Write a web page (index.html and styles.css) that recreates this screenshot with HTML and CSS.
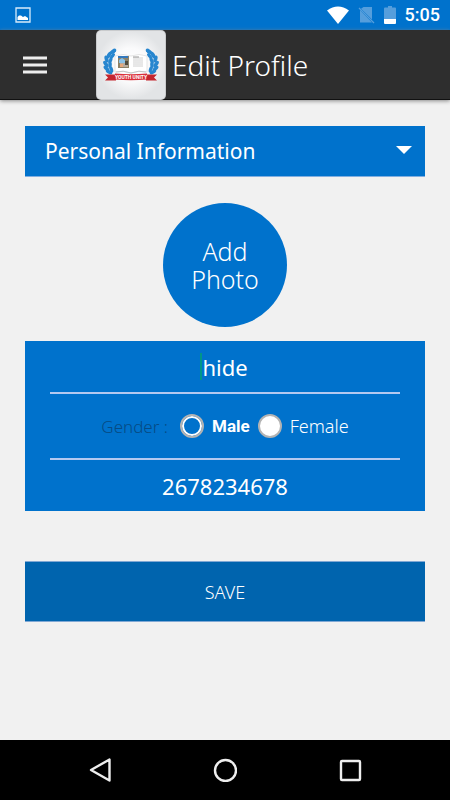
FILE: index.html
```html
<!DOCTYPE html>
<html lang="en">
<head>
<meta charset="utf-8">
<meta name="viewport" content="width=device-width, initial-scale=1">
<title>Edit Profile</title>
<link rel="stylesheet" href="styles.css">
</head>
<body>
<div class="status-bar">
  <svg class="status-picture" width="16" height="16" viewBox="0 0 16 16" aria-hidden="true">
    <path d="M1 1H15V15H1Z" fill="none" stroke="#d7ebfa" stroke-width="1.3"/>
    <path d="M2.500 13V10L4 8.500H6L8 10L10 9L13 11V13Z" fill="#fff"/>
  </svg>
  <div class="status-icons">
    <svg width="22" height="18" viewBox="0 0 22 18" aria-hidden="true"><path d="M0 4.500Q11-3.500 22 4.500L11 18Z" fill="#fff"/></svg>
    <svg width="17" height="18" viewBox="0 0 17 18" aria-hidden="true">
      <path d="M5.500 1H14V13.500L3 2.700ZM2 4L14 16.500H2Z" fill="#559edc"/>
      <path d="M1 2L16 17" stroke="#559edc" stroke-width="1.300"/>
    </svg>
    <svg width="12" height="18" viewBox="0 0 12 18" aria-hidden="true">
      <path d="M4 0H8V1.500H11Q12 1.500 12 2.500V13H0V2.500Q0 1.500 1 1.500H4Z" fill="#559edc"/>
      <path d="M0 13H12V17Q12 18 11 18H1Q0 18 0 17Z" fill="#fff"/>
    </svg>
  </div>
  <span class="clock">5:05</span>
</div>
<header class="app-bar">
  <button class="menu-button" type="button" aria-label="Menu">
    <svg width="24" height="18" viewBox="0 0 24 18"><path d="M0 2H24M0 9H24M0 16H24" stroke="#eee" stroke-width="2.800"/></svg>
  </button>
  <svg class="logo" width="70" height="70" viewBox="0 0 70 70" role="img" aria-label="Youth Unity">
    <defs>
      <radialGradient id="tile"><stop offset="0" stop-color="#fff"/><stop offset=".5" stop-color="#fafafb"/><stop offset="1" stop-color="#e2e4e6"/></radialGradient>
      <g id="laurel">
        <path d="M20 21Q7 31 16 43" fill="none" stroke="#5aa6de" stroke-width="1"/>
        <g fill="#2786cf">
          <ellipse cx="17" cy="21.500" rx="3.800" ry="1.900" transform="rotate(-38 17 21.500)"/>
          <ellipse cx="13" cy="25" rx="3.800" ry="1.900" transform="rotate(-60 13 25)"/>
          <ellipse cx="10.500" cy="29" rx="3.600" ry="1.900" transform="rotate(75 10.500 29)"/>
          <ellipse cx="9.800" cy="34" rx="3.600" ry="1.900" transform="rotate(55 9.800 34)"/>
          <ellipse cx="10.500" cy="38.500" rx="3.600" ry="1.900" transform="rotate(45 10.500 38.500)"/>
          <ellipse cx="13" cy="42" rx="3.600" ry="1.700" transform="rotate(30 13 42)"/>
          <ellipse cx="16.500" cy="26" rx="3.200" ry="1.600" transform="rotate(-50 16.500 26)"/>
          <ellipse cx="14.500" cy="30.500" rx="3.200" ry="1.600" transform="rotate(-65 14.500 30.500)"/>
          <ellipse cx="14.200" cy="35" rx="3.200" ry="1.600" transform="rotate(-85 14.200 35)"/>
          <ellipse cx="15.500" cy="39.500" rx="3.200" ry="1.600" transform="rotate(75 15.500 39.500)"/>
        </g>
      </g>
    </defs>
    <rect width="70" height="70" rx="5" fill="#c9cbcd"/>
    <rect x="1" y="1" width="68" height="68" rx="4" fill="url(#tile)"/>
    <use href="#laurel"/>
    <use href="#laurel" transform="translate(70 0) scale(-1 1)"/>
    <path d="M19 26Q27 23 35 26Q43 23 51 26V42Q43 40 35 43Q27 40 19 42Z" fill="#fff" stroke="#dedede" stroke-width=".8"/>
    <path d="M20 42Q27 40 35 43Q43 40 50 42" fill="none" stroke="#c4c4c4"/>
    <path d="M22 26H33V38H22Z" fill="#8d8268"/>
    <path d="M22 26H32V28H22Z" fill="#3478bc"/>
    <path d="M23 30L26 28L29 30V33H23Z" fill="#8ac2e8"/>
    <path d="M24 33H32V37H24Z" fill="#b8aa9b"/>
    <path d="M29 31H32V35H29Z" fill="#4f4a3d"/>
    <path d="M24 34H27V37H24Z" fill="#e7a87c"/>
    <path d="M37 28H47M37 30H47M37 32H47M37 34H47M37 36H47" stroke="#d0d0d0" stroke-width="1"/>
    <path d="M37 27H43" stroke="#999"/>
    <path d="M9 44.500H20V50.500H9L12 47.500ZM61 44.500H50V50.500H61L58 47.500Z" fill="#c4262f"/>
    <path d="M19 43.500Q35 45 51 43.500V49.500Q35 51 19 49.500Z" fill="#d92f39"/>
    <text class="logo-text" x="35" y="49" text-anchor="middle">YOUTH UNITY</text>
  </svg>
  <h1 class="title">Edit Profile</h1>
</header>
<main class="content">
  <div class="section-picker">
    <select class="section-select" aria-label="Section"><option>Personal Information</option></select>
    <svg class="picker-arrow" width="16" height="8" viewBox="0 0 16 8" aria-hidden="true"><path d="M0 0H16L8 8Z" fill="#fff"/></svg>
  </div>
  <button class="photo-button" type="button">Add Photo</button>
  <form class="profile-form" id="profile">
    <div class="name-row">
      <input class="field" type="text" value="hide" aria-label="Name">
      <span class="caret"></span>
    </div>
    <fieldset class="gender" aria-labelledby="gender-label">
      <span class="gender-label" id="gender-label">Gender :</span>
      <label class="choice"><input class="radio" type="radio" name="gender" checked><span class="choice-text">Male</span></label>
      <label class="choice"><input class="radio" type="radio" name="gender"><span class="choice-text">Female</span></label>
    </fieldset>
    <input class="field" type="tel" value="2678234678" aria-label="Phone">
  </form>
  <button class="save-button" type="submit" form="profile">SAVE</button>
</main>
<nav class="nav-bar">
  <button class="nav-button" type="button" aria-label="Back"><svg width="24" height="24" viewBox="0 0 24 24"><path d="M21.500 1.500V22.500L3 12Z"/></svg></button>
  <button class="nav-button" type="button" aria-label="Home"><svg width="24" height="24" viewBox="0 0 24 24"><circle cx="12.500" cy="12.500" r="10.500"/></svg></button>
  <button class="nav-button" type="button" aria-label="Recent apps"><svg width="24" height="24" viewBox="0 0 24 24"><rect x="3" y="3" width="19" height="19" rx="1"/></svg></button>
</nav>
</body>
</html>
```
FILE: styles.css
```css
* {
  box-sizing: border-box;
}

body {
  display: flex;
  flex-direction: column;
  min-height: 100vh;
  margin: 0;
  background: #f1f1f1;
  color: #fff;
  font-family: "Noto Sans", "Open Sans", sans-serif;
  font-weight: 400;
}

button,
input,
select {
  margin: 0;
  padding: 0;
  border: 0;
  color: inherit;
  font: inherit;
}

svg {
  display: block;
  flex: none;
}

.status-bar {
  display: flex;
  align-items: center;
  height: 30px;
  padding: 0 10px 0 15px;
  background: #0072cc;
}

.status-icons {
  display: flex;
  gap: 9px;
  margin-left: auto;
}

.clock {
  margin-left: 9px;
  font: 500 18px/30px Roboto, sans-serif;
}

.app-bar {
  display: flex;
  align-items: center;
  height: 70px;
  padding-left: 23px;
  background: #2e2e2e;
  border-bottom: 1px solid #111;
  box-shadow: 0 1px 4px #888;
}

.menu-button {
  margin-right: 49px;
  background: none;
}

.logo-text {
  fill: #fff;
  font: 700 5px Roboto, sans-serif;
}

.title {
  margin: 0 0 0 6px;
  font-size: 28px;
  font-weight: 300;
  line-height: 36px;
}

.content {
  display: flex;
  flex: 1;
  flex-direction: column;
  padding: 26px 25px;
}

.section-picker {
  position: relative;
}

.section-select {
  display: block;
  width: 100%;
  height: 51px;
  padding: 0 40px 0 20px;
  appearance: none;
  background: #0072cc;
  border-bottom: 1px solid #80aee0;
  border-radius: 0;
  font-size: 21px;
}

.picker-arrow {
  position: absolute;
  top: 20px;
  right: 13px;
  pointer-events: none;
}

.photo-button {
  align-self: center;
  width: 124px;
  height: 124px;
  margin: 26px 0 14px;
  padding: 0 24px;
  background: #0072cc;
  border-radius: 50%;
  font-size: 25px;
  font-weight: 300;
  line-height: 28px;
}

.profile-form {
  padding: 0 25px;
  background: #0072cc;
}

.name-row {
  position: relative;
}

.field {
  display: block;
  width: 100%;
  height: 51px;
  background: none;
  font-size: 22px;
  text-align: center;
  outline: 0;
}

.caret {
  position: absolute;
  top: 12px;
  left: calc(50% - 25px);
  width: 2px;
  height: 27px;
  background: #009688;
}

.gender {
  display: flex;
  align-items: center;
  justify-content: center;
  height: 68px;
  margin: 0;
  padding: 0;
  border: solid #b4c9f0;
  border-width: 2px 0;
  font-size: 18px;
  font-weight: 300;
}

.gender-label {
  margin-right: 12px;
  color: #064b84;
  font-size: 17px;
}

.choice {
  display: flex;
  align-items: center;
  gap: 8px;
}

.choice + .choice {
  margin-left: 8px;
}

.radio {
  width: 24px;
  height: 24px;
  appearance: none;
  background: #fff;
  border: 2px solid #b3b3b3;
  border-radius: 50%;
}

.radio:checked {
  background: #0072cc;
  box-shadow: inset 0 0 0 2px #fff;
}

.radio:checked + .choice-text {
  font-family: Roboto, sans-serif;
  font-size: 17px;
  font-weight: 700;
}

.save-button {
  height: 61px;
  margin-top: 50px;
  background: #0064ae;
  border: solid #80a8d4;
  border-width: 1px 0;
  font-size: 18px;
  font-weight: 300;
}

.nav-bar {
  display: flex;
  justify-content: center;
  height: 60px;
  background: #000;
}

.nav-button {
  display: flex;
  align-items: center;
  justify-content: center;
  width: 125px;
  background: none;
}

.nav-button svg {
  fill: none;
  stroke: #eee;
  stroke-width: 2.4;
  stroke-linejoin: round;
}
```
